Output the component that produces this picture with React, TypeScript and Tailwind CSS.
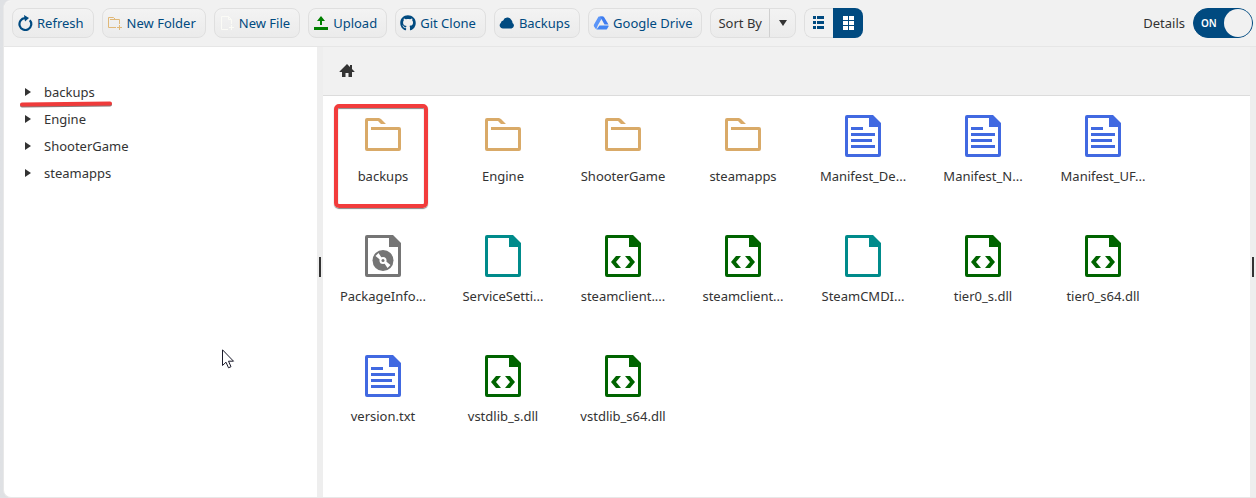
import React, { useState } from "react";
import { FaGithub } from "react-icons/fa";

type Kind = "folder" | "text" | "disc" | "file" | "code";

const folders = ["backups", "Engine", "ShooterGame", "steamapps"];

const entries: { name: string; kind: Kind }[] = [
  { name: "backups", kind: "folder" },
  { name: "Engine", kind: "folder" },
  { name: "ShooterGame", kind: "folder" },
  { name: "steamapps", kind: "folder" },
  { name: "Manifest_De...", kind: "text" },
  { name: "Manifest_N...", kind: "text" },
  { name: "Manifest_UF...", kind: "text" },
  { name: "PackageInfo...", kind: "disc" },
  { name: "ServiceSetti...", kind: "file" },
  { name: "steamclient....", kind: "code" },
  { name: "steamclient...", kind: "code" },
  { name: "SteamCMDI...", kind: "file" },
  { name: "tier0_s.dll", kind: "code" },
  { name: "tier0_s64.dll", kind: "code" },
  { name: "version.txt", kind: "text" },
  { name: "vstdlib_s.dll", kind: "code" },
  { name: "vstdlib_s64.dll", kind: "code" },
];

const iconColors = {
  folder: "text-[#d9aa68]",
  text: "text-[#4169e1]",
  disc: "text-[#757575]",
  file: "text-[#008b8b]",
  code: "text-[#006400]",
};

const EntryIcon = ({ kind }: { kind: Kind }) => (
  <svg viewBox="0 0 48 48" fill="currentColor" className={`size-12 ${iconColors[kind]}`}>
    {kind === "folder" ? (
      <path d="M8 6h12l2 1 5 5h-5l-3-3H9v27h30V18H12v-3h28a2 2 0 0 1 2 2v20a2 2 0 0 1-2 2H8a2 2 0 0 1-2-2V8a2 2 0 0 1 2-2z" />
    ) : (
      <path
        fillRule="evenodd"
        d="M8 3h26l8 8v32a2 2 0 0 1-2 2H8a2 2 0 0 1-2-2V5a2 2 0 0 1 2-2zM9 6v36h30V15h-9V6z"
      />
    )}
    {kind === "text" && <path d="M12 15h12v3H12zM12 21h24v3H12zM12 27h21v3H12zM12 33h24v3H12z" />}
    {kind === "code" && (
      <path d="M22 24h-5l-5 6 5 6h5l-5-6zM26 24h5l5 6-5 6h-5l5-6z" />
    )}
    {kind === "disc" && (
      <>
        <circle cx="24" cy="28.500" r="10.500" />
        <path d="M16.500 24l3-3 4 6-1.500 1.500zM31.500 33l-3 3-4-6 1.500-1.500z" fill="#fff" />
        <circle cx="24" cy="28.500" r="3.500" fill="#fff" />
        <circle cx="24" cy="28.500" r="1.500" />
      </>
    )}
  </svg>
);

const RefreshIcon = () => (
  <svg viewBox="0 0 16 16" className="size-4">
    <path d="M12.800 5.200A5.900 5.900 0 1 1 8 3.200" fill="none" stroke="currentColor" strokeWidth="2.200" />
    <path d="M7 0l5 3-4 3.500z" fill="currentColor" />
  </svg>
);

const NewFolderIcon = () => (
  <svg viewBox="0 0 16 16" className="size-4 text-[#e0b878]" fill="none" stroke="currentColor">
    <path d="M9 12.500H1.500v-10h5l2 2M3 4.500h9.500V9M12.500 10v5M10 12.500h5" />
  </svg>
);

const NewFileIcon = () => (
  <svg viewBox="0 0 16 16" className="size-4 text-[#fbfbf6]" fill="none" stroke="currentColor">
    <path d="M9 14.500H2.500v-13h7l3 3V9M9.500 1.500v3h3M12.500 10v5M10 12.500h5" />
  </svg>
);

const UploadIcon = () => (
  <svg viewBox="0 0 16 16" className="size-4 text-[#008000]" fill="currentColor">
    <path d="M1 12h14v3H1zM7 10V6H4l4-5 4 5H9v4z" />
  </svg>
);

const CloudIcon = () => (
  <svg viewBox="0 0 16 16" className="size-4" fill="currentColor">
    <path d="M4 13.500a3.200 3.200 0 0 1-2.200-5.600A3 3 0 0 1 4.200 5.500 4.500 4.500 0 0 1 12.400 5a4 4 0 0 1 1.100 3A3 3 0 0 1 12.500 13.500z" />
  </svg>
);

const DriveIcon = () => (
  <svg viewBox="0 0 16 16" className="size-4">
    <path d="M6 1.500h4L5 10 3.200 14.500 1 11.500Q.5 10.500 1 9.500L5 2.500Q5.400 1.500 6 1.500z" fill="#5b95f8" />
    <path d="M7 1.500h3q.8 0 1.300.9L15.500 9.500h-4z" fill="#3f7df0" />
    <path d="M6.500 10.500h9v1L14 14q-.4.500-1 .5H3.500z" fill="#4285f4" />
  </svg>
);

const ListIcon = () => (
  <svg viewBox="0 0 16 16" className="size-4" fill="currentColor">
    <path d="M2 1h3v3H2zM6 1h7v3H6zM2 6h3v3H2zM6 6h7v3H6zM2 11h3v3H2zM6 11h7v3H6z" />
  </svg>
);

const GridIcon = () => (
  <svg viewBox="0 0 16 16" className="size-4" fill="currentColor">
    <path d="M3 1h5v4H3zM9 1h5v4H9zM3 6h5v4H3zM9 6h5v4H9zM3 11h5v4H3zM9 11h5v4H9z" />
  </svg>
);

const ToolButton = ({ icon, children }: { icon: React.ReactNode; children: React.ReactNode }) => (
  <button className="flex h-[30px] items-center gap-1 rounded-lg border border-[#dfdfdf] bg-linear-to-b from-[#f3f3f3] to-[#ebebeb] pl-1 pr-[9px] text-[#004a80]">
    {icon}
    {children}
  </button>
);

const Splitter = () => (
  <div className="flex w-[6px] shrink-0 items-center justify-center bg-[#eeeeee] pb-[10px]">
    <div className="h-5 w-[2px] bg-[#333]" />
  </div>
);

export default function App() {
  const [details, setDetails] = useState(true);

  return (
    <div className="flex min-h-screen flex-col bg-linear-to-r from-[#dfe1e4] to-[#e6e6e6] pl-[3px] font-['Noto_Sans',sans-serif] text-[13px] leading-5 text-[#333]">
      <div className="flex grow flex-col overflow-hidden rounded-l-lg border-y border-l border-[#e8e8e8] border-t-[#f1f1f1] bg-white">
        <header className="flex items-center gap-2 border-b border-[#e6e6e6] bg-[#f1f1f1] pt-[7px] pr-[3px] pb-2 pl-2">
          <ToolButton icon={<RefreshIcon />}>Refresh</ToolButton>
          <ToolButton icon={<NewFolderIcon />}>New Folder</ToolButton>
          <ToolButton icon={<NewFileIcon />}>New File</ToolButton>
          <ToolButton icon={<UploadIcon />}>Upload</ToolButton>
          <ToolButton icon={<FaGithub className="size-4" />}>Git Clone</ToolButton>
          <ToolButton icon={<CloudIcon />}>Backups</ToolButton>
          <ToolButton icon={<DriveIcon />}>Google Drive</ToolButton>
          <div className="flex h-[30px] overflow-hidden rounded-lg border border-[#dfdfdf] bg-linear-to-b from-[#f3f3f3] to-[#ebebeb]">
            <button className="px-[7px]">Sort By</button>
            <button aria-label="Sort options" className="flex w-[26px] items-center justify-center border-l border-[#d0d0d0]">
              <svg viewBox="0 0 8 6" className="h-[6px] w-2" fill="currentColor">
                <path d="M0 0h8L4 6z" />
              </svg>
            </button>
          </div>
          <div className="flex h-[30px] overflow-hidden rounded-lg">
            <button
              aria-label="List view"
              className="flex w-[29px] items-center justify-center rounded-l-lg border border-r-0 border-[#dfdfdf] bg-[#f1f1f1] text-[#004a80]"
            >
              <ListIcon />
            </button>
            <button aria-label="Grid view" className="flex w-[30px] items-center justify-center bg-[#004a80] text-white">
              <GridIcon />
            </button>
          </div>
          <label className="ml-auto flex items-center gap-2">
            Details
            <input
              type="checkbox"
              className="peer sr-only"
              checked={details}
              onChange={(e) => setDetails(e.currentTarget.checked)}
            />
            <span className="flex h-[30px] w-[60px] items-center justify-between rounded-full border border-[#004a80] bg-[#004a80] pl-[7px] text-[10px] font-semibold text-white">
              {details ? "ON" : "OFF"}
              <span className="size-7 rounded-full bg-[#f1f1f1]" />
            </span>
          </label>
        </header>

        <div className="flex grow">
          <nav className="w-[313px] shrink-0 pt-[31px] pl-5">
            <ul>
              {folders.map((name) => (
                <li key={name} className="relative flex h-[27px] items-center gap-[13px]">
                  <svg viewBox="0 0 6 8" className="ml-[1px] h-2 w-[6px]" fill="currentColor">
                    <path d="M0 0l6 4-6 4z" />
                  </svg>
                  {name}
                  {name === "backups" && (
                    <svg viewBox="0 0 96 8" className="absolute top-[22px] -left-[6px] h-2 w-24">
                      <path d="M4 5.500L92 4.500" stroke="#8a7a7a" strokeWidth="4" strokeLinecap="round" />
                      <path d="M4 4.500L92 3.500" stroke="#ef3b3b" strokeWidth="4" strokeLinecap="round" />
                    </svg>
                  )}
                </li>
              ))}
            </ul>
          </nav>
          <Splitter />
          <main className="min-w-0 grow">
            <div className="flex h-[49px] items-center border-b border-[#dcdcdc] bg-[#f1f1f1] px-4">
              <a href="#" aria-label="Home">
                <svg viewBox="0 0 16 16" className="size-4" fill="currentColor">
                  <path d="M8 1l3 3V2h2v4l2.500 2.500V9H13v5H9.500V10h-3v4H3V9H.5v-.5z" />
                </svg>
              </a>
            </div>
            <ul className="flex flex-wrap">
              {entries.map(({ name, kind }, i) => (
                <li key={i} className="relative flex h-[120px] w-[120px] flex-col items-center gap-[6px] pt-4">
                  <EntryIcon kind={kind} />
                  <span>{name}</span>
                  {name === "backups" && (
                    <div className="absolute top-2 right-[15px] bottom-2 left-[11px] rounded-[5px] border-4 border-[#f23c3c] shadow-[0_1px_1px_#888,inset_0_1px_1px_#888]" />
                  )}
                </li>
              ))}
            </ul>
          </main>
          <Splitter />
        </div>
      </div>
      {/* mouse pointer */}
      <svg viewBox="0 0 13 20" className="absolute top-[349px] left-[222px] h-5 w-[13px]">
        <path d="M.5 .8v15.700l3.500-3.300 2.500 5.600 2.500-1.100-2.500-5.500h5z" fill="#fff" stroke="#1a1a2a" />
      </svg>
    </div>
  );
}
